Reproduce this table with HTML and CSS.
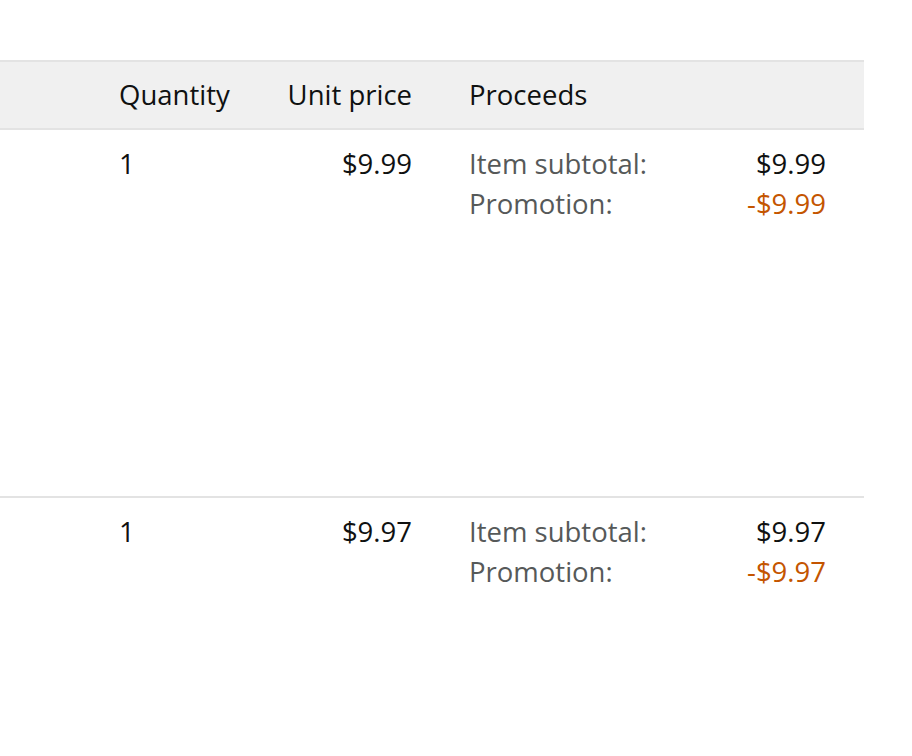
FILE: index.html
```html
<!DOCTYPE html>
<html>
<head>
<meta charset="utf-8">
<link rel="stylesheet" href="styles.css">
</head>
<body>
<div class="page">
  <div class="table">
    <div class="row head">
      <div class="cell qty">Quantity</div>
      <div class="cell price">Unit price</div>
      <div class="cell proceeds">Proceeds</div>
    </div>
    <div class="row item">
      <div class="cell qty">1</div>
      <div class="cell price">$9.99</div>
      <div class="cell proceeds">
        <div class="line"><span class="label">Item subtotal:</span><span class="amount">$9.99</span></div>
        <div class="line"><span class="label">Promotion:</span><span class="amount promo">-$9.99</span></div>
      </div>
    </div>
    <div class="row item last">
      <div class="cell qty">1</div>
      <div class="cell price">$9.97</div>
      <div class="cell proceeds">
        <div class="line"><span class="label">Item subtotal:</span><span class="amount">$9.97</span></div>
        <div class="line"><span class="label">Promotion:</span><span class="amount promo">-$9.97</span></div>
      </div>
    </div>
  </div>
</div>
</body>
</html>
```
FILE: styles.css
```css
html, body {
  margin: 0;
  background: #fff;
}
.page {
  padding-top: 60px;
  font-family: "Open Sans", "Noto Sans", sans-serif;
  font-size: 27.5px;
  color: #0f1111;
}
.table {
  width: 864px;
}
.row {
  display: grid;
  grid-template-columns: 140px 153px 1fr;
  padding-left: 119px;
  padding-right: 38px;
  line-height: 40px;
}
.head {
  background: #f0f0f0;
  border-top: 2px solid #e3e3e3;
  border-bottom: 2px solid #e3e3e3;
  height: 66px;
  align-items: center;
}
.item {
  padding-top: 14px;
  height: 352px;
}
.item + .item {
  border-top: 2px solid #e3e3e3;
}
.item.last {
  height: 230px;
}
.price {
  text-align: right;
}
.proceeds {
  padding-left: 57px;
}
.line {
  display: flex;
  justify-content: space-between;
}
.label {
  color: #565959;
}
.promo {
  color: #c45500;
}
```
